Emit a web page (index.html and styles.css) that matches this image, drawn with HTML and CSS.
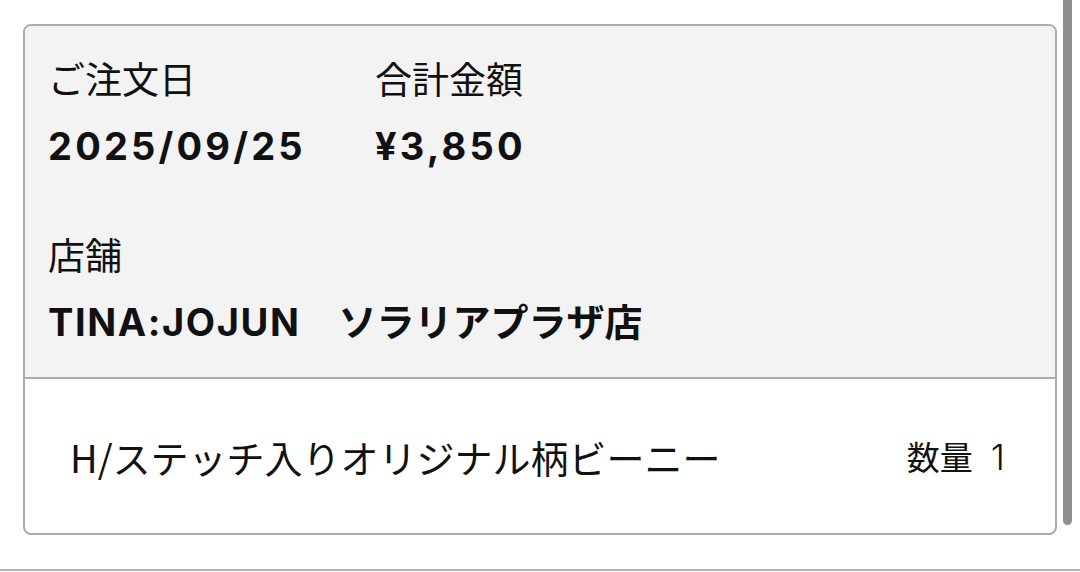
FILE: index.html
```html
<!DOCTYPE html>
<html lang="ja">
<head>
  <meta charset="UTF-8" />
  <meta name="viewport" content="width=device-width, initial-scale=1.0" />
  <title>注文履歴</title>
  <link rel="stylesheet" href="styles.css">
</head>
<body>

  <div class="page">
    <div class="order">
      <div class="summary">
        <div class="row">
          <div class="field date">
            <div class="label">ご注文日</div>
            <div class="value num">2025/09/25</div>
          </div>
          <div class="field">
            <div class="label">合計金額</div>
            <div class="value num">¥3,850</div>
          </div>
        </div>
        <div class="field shop">
          <div class="label">店舗</div>
          <div class="value"><span class="latin">TINA:JOJUN</span>　ソラリアプラザ店</div>
        </div>
      </div>
      <div class="item">
        <span class="item-name">H/ステッチ入りオリジナル柄ビーニー</span>
        <span class="item-qty">数量<span class="qty">1</span></span>
      </div>
    </div>
    <div class="scroll-track">
      <div class="scroll-thumb"></div>
    </div>
  </div>
  <div class="next"></div>

</body>
</html>
```

FILE: styles.css
```css
* { box-sizing: border-box; }
body { margin: 0; background: #fff; color: #111; font-family: "Inter", "Noto Sans CJK JP", sans-serif; }
.page { height: 569px; display: flex; align-items: flex-start; padding-left: 23px; }
.order { width: 1034px; height: 511px; margin-top: 24px; border: 2px solid #ababab; border-radius: 8px; overflow: hidden; display: flex; flex-direction: column; }
.summary { background: #f3f3f3; padding: 30px 0 32px 23px; border-bottom: 2px solid #ababab; }
.row { display: flex; margin-bottom: 63px; }
.field.date { width: 327px; }
.label { font-size: 37px; line-height: 44px; margin-bottom: 23px; font-family: "Noto Sans CJK JP", sans-serif; }
.value { font-size: 38px; line-height: 46px; font-weight: 700; }
.value.num { letter-spacing: 3.2px; }
.latin { letter-spacing: 1.6px; }
.item { flex: 1; display: flex; align-items: center; justify-content: space-between; padding: 0 50px 0 45px; font-family: "Noto Sans CJK JP", sans-serif; }
.item-name { font-size: 38px; }
.item-qty { font-size: 33px; }
.qty { margin-left: 18px; font-family: "Inter", sans-serif; font-size: 36px; font-weight: 300; }
.scroll-track { flex: none; width: 23px; height: 525px; padding-left: 6px; }
.scroll-thumb { width: 9px; height: 100%; background: #8f8f8f; border-radius: 0 0 5px 5px; }
.next { border-top: 2px solid #b4b4b4; }
```
